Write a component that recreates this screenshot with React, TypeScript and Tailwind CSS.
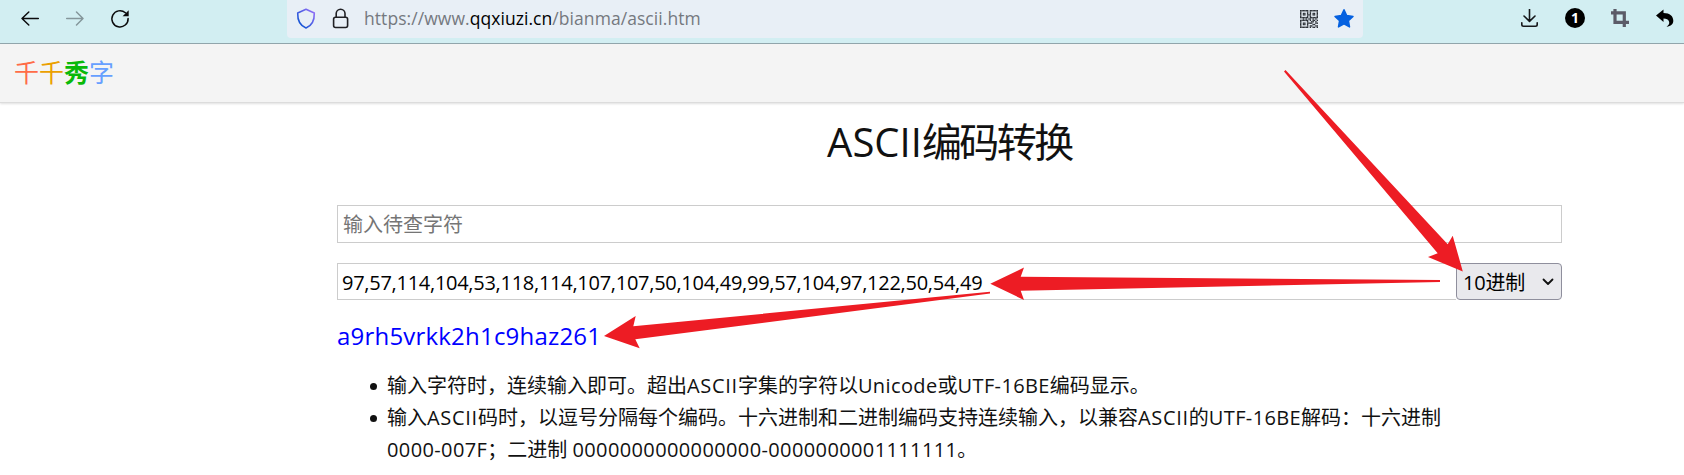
import React from "react";

const latinFont = "font-['Open_Sans','Noto_Sans_CJK_SC',sans-serif]";

function Latin({ children }: { children: React.ReactNode }) {
  return <span className="tracking-[0.38px]">{children}</span>;
}

function Ascii() {
  return <span className="tracking-[0.7px]">ASCII</span>;
}

const qrRows = [
  "1111110111111",
  "1000010100001",
  "1011010101101",
  "1011011101101",
  "1000010100001",
  "1111110111111",
  "0010101101010",
  "1111110101101",
  "1000010011010",
  "1011011110011",
  "1011010001100",
  "1000010110011",
  "1111110101101",
];

function QrIcon() {
  return (
    <svg className="h-[18px] w-[18px]" viewBox="0 0 13 13">
      {qrRows.map((row, y) =>
        row.split("").map((c, x) =>
          c === "1" ? <rect key={`${x}-${y}`} x={x} y={y} width="1.020" height="1.020" fill="#2c3036" /> : null
        )
      )}
    </svg>
  );
}

function Toolbar() {
  return (
    <div className="flex h-[44px] items-start border-b border-[#93a7ad] bg-[#d2eef2]">
      <div className="flex h-[38px] w-[287px] items-center pl-[20px]">
        <svg className="h-5 w-5" viewBox="0 0 20 20" fill="none" stroke="#0b0b0d" strokeWidth="1.5" strokeLinecap="round" strokeLinejoin="round">
          <path d="M18.3 9.5H2M8.8 3L2 9.5l6.800 6.500" />
        </svg>
        <svg className="ml-[25px] h-5 w-5" viewBox="0 0 20 20" fill="none" stroke="#85969b" strokeWidth="1.5" strokeLinecap="round" strokeLinejoin="round">
          <path d="M1.700 9.500H18M11.500 3L18 9.500l-6.500 6.500" />
        </svg>
        <svg className="ml-[25px] h-5 w-5" viewBox="0 0 20 20" fill="none">
          <path d="M15.400 3.800A8.100 8.100 0 1 0 18.100 9.500" stroke="#0b0b0d" strokeWidth="1.500" strokeLinecap="round" />
          <path d="M18.700 1.200V7.300H12.600Z" fill="#0b0b0d" />
        </svg>
      </div>
      <div className="flex h-[38px] w-[1076px] items-center rounded-b bg-[#e8eff6] pr-[8px]">
        <svg className="ml-[9px] h-[22px] w-5" viewBox="0 0 20 22" fill="none">
          <defs>
            <linearGradient id="shield" x1="0" y1="1" x2="1" y2="0">
              <stop offset="0.2" stopColor="#1a56d6" />
              <stop offset="0.9" stopColor="#8c6cf5" />
            </linearGradient>
          </defs>
          <path d="M10 1.300L18.300 5C18.500 11.500 16.200 17.500 10 20C3.800 17.500 1.500 11.500 1.700 5Z" stroke="url(#shield)" strokeWidth="1.600" strokeLinejoin="round" />
        </svg>
        <svg className="ml-[15px] h-[22px] w-5" viewBox="0 0 20 22" fill="none" stroke="#202024" strokeWidth="1.600">
          <rect x="2.600" y="9.300" width="14" height="10.200" rx="2" />
          <path d="M5.200 9.300V5.600a4.400 4.400 0 0 1 8.800 0V9.300" />
        </svg>
        <div className="ml-[13px] whitespace-nowrap pb-px text-[17.5px] leading-[37px] tracking-[0.06px] text-[#75797f]">
          https://www.<span className="text-black">qqxiuzi.cn</span>/bianma/ascii.htm
        </div>
        <div className="ml-auto flex items-center gap-[15px]">
          <QrIcon />
          <svg className="h-[22px] w-[22px]" viewBox="0 0 22 22" fill="#0561e0" stroke="#0561e0" strokeWidth="1.500" strokeLinejoin="round">
            <path d="M11 1.800L13.700 7.600L20 8.400L15.400 12.700L16.500 18.900L11 15.900L5.500 18.900L6.600 12.700L2 8.400L8.300 7.600Z" />
          </svg>
        </div>
      </div>
      <div className="flex h-[38px] flex-1 items-center pl-[157px]">
        <svg className="h-5 w-5" viewBox="0 0 20 20" fill="none" stroke="#15171a" strokeWidth="1.600" strokeLinecap="round" strokeLinejoin="round">
          <path d="M9.500 .2V12M4 7l5.500 5.400L15 7M1.800 13.800v1.700c0 1 .7 1.700 1.700 1.700h12c1 0 1.700-.7 1.700-1.700v-1.700" />
        </svg>
        <div className="mb-[2px] ml-[25px] flex h-5 w-5 items-center justify-center rounded-full bg-black font-['Open_Sans',sans-serif] text-[14px] font-bold leading-none text-white">1</div>
        <svg className="ml-[25px] h-5 w-5" viewBox="0 0 20 20" fill="none" stroke="#5b5b68" strokeWidth="3.200">
          <path d="M5 0V13.300H19M1 3.900H14.300V18" />
        </svg>
        <svg className="ml-[26px] h-5 w-[18px]" viewBox="0 0 18 20" fill="#000">
          <path d="M0 6.500L7.500 .5V4.100C14 4.100 17.300 7.500 17.300 11.800C17.300 15 15 17.300 10.500 17.800C12.800 16.300 13.800 14.500 13 12.500C12.200 10.500 10.500 9.600 7.500 9.600V13Z" />
        </svg>
      </div>
    </div>
  );
}

function Arrows() {
  return (
    <svg className="pointer-events-none absolute inset-0 h-[475px] w-[1684px]" viewBox="0 0 1684 475" fill="#ed1c24">
      <path d="M1284 71.500L1285.500 70L1447.700 244.300L1452.700 235.700L1462.800 271.400L1428 257L1437.700 253.300Z" />
      <path d="M1440 280V282L1020.700 290.700L1024 300L990.300 283.800L1024 267.600L1020.700 276.700Z" />
      <path d="M990 291.800V293.600L635.300 339.300L639.700 348.300L604 335.900L635.700 316L633.300 326.300Z" />
    </svg>
  );
}

export default function App() {
  return (
    <div className={`relative h-[475px] w-[1684px] overflow-hidden bg-white text-[#111] ${latinFont}`}>
      <Toolbar />
      <header className="flex h-[59px] items-center border-b border-[#dcdcdc] bg-[#f4f4f4] pb-[2px] pl-[14px] text-[25px] leading-[56px] shadow-[0_1px_2px_rgba(0,0,0,0.12)]">
        <span className="text-[#ff6c47]">千</span>
        <span className="text-[#eba000]">千</span>
        <span className="font-bold text-[#09b909]">秀</span>
        <span className="text-[#669fff]">字</span>
      </header>
      <main className="ml-[337px] w-[1225px]">
        <h1 className="flex h-[102px] items-start justify-center pt-[12px] text-[40px] leading-[54px]">
          <span>ASCII</span>
          <span className="tracking-[-2.5px]">编码转换</span>
        </h1>
        <div className="flex h-[38px] items-center border border-[#ccc] pl-[5px] pt-[2px] text-[20px] text-[#757575]">输入待查字符</div>
        <div className="mt-5 flex h-[37px] text-[20px] text-black">
          <div className="flex flex-1 items-center border border-r-0 border-[#ccc] pl-[4px] pt-[2px] tracking-[-0.27px]">
            97,57,114,104,53,118,114,107,107,50,104,49,99,57,104,97,122,50,54,49
          </div>
          <div className="flex w-[106px] items-center justify-between rounded-[4px] border border-[#8f8f9d] bg-[#e9e9ed] pl-[6px] pr-[7px]">
            <span className="pt-[2px] tracking-[-0.2px]">10进制</span>
            <svg className="h-[8px] w-[12px]" viewBox="0 0 12 8" fill="none" stroke="#111" strokeWidth="1.800" strokeLinecap="round" strokeLinejoin="round">
              <path d="M1.500 1.500L6 6L10.500 1.500" />
            </svg>
          </div>
        </div>
        <div className="mt-[18px] h-[52px] text-[24px] leading-[36px] tracking-[0.2px] text-[#0000ff]">a9rh5vrkk2h1c9haz261</div>
        <ul className="list-none whitespace-nowrap text-[20px] leading-[32px]">
          <li className="flex">
            <span className="ml-[33px] mr-[10px] mt-[13px] h-[7px] w-[7px] rounded-full bg-[#111]" />
            <div>
              输入字符时，连续输入即可。超出<Ascii />字集的字符以<Latin>Unicode</Latin>或<Latin>UTF-16BE</Latin>编码显示。
            </div>
          </li>
          <li className="flex">
            <span className="ml-[33px] mr-[10px] mt-[13px] h-[7px] w-[7px] rounded-full bg-[#111]" />
            <div>
              <div>
                输入<Ascii />码时，以逗号分隔每个编码。十六进制和二进制编码支持连续输入，以兼容<Ascii />的<Latin>UTF-16BE</Latin>解码：十六进制
              </div>
              <div>
                <Latin>0000-007F</Latin>；二进制 <Latin>0000000000000000-0000000001111111</Latin>。
              </div>
            </div>
          </li>
        </ul>
      </main>
      <Arrows />
    </div>
  );
}
